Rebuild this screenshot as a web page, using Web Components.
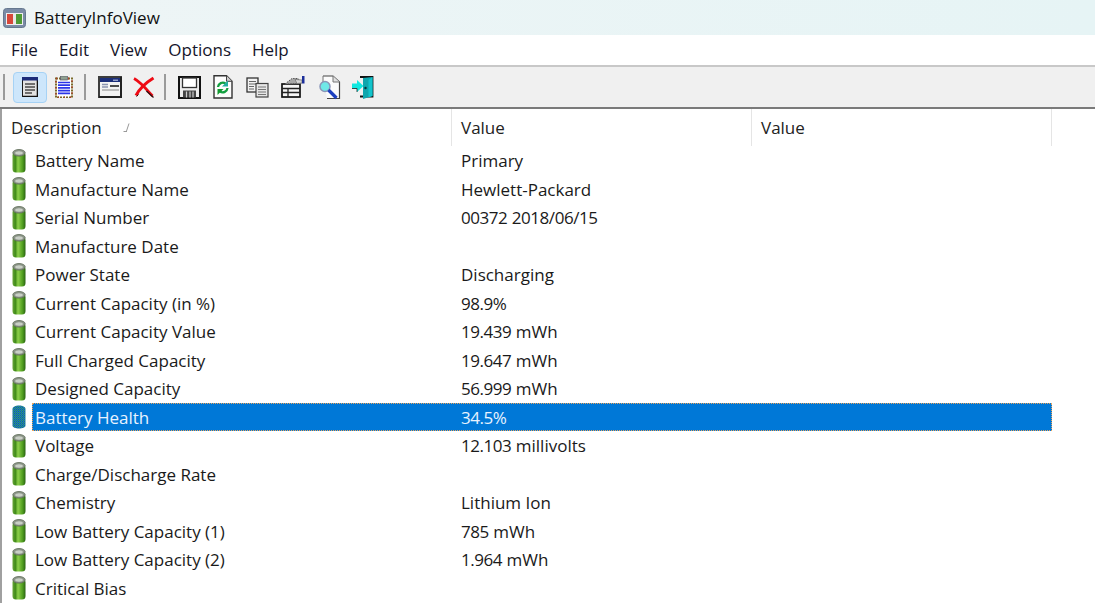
<!DOCTYPE html>
<html><head><meta charset="utf-8">
<style>
html,body{margin:0;padding:0;background:#fff;width:1095px;height:603px;overflow:hidden;font-family:"Open Sans","Noto Sans",sans-serif;color:#1a1a1a}
</style></head><body>
<app-window></app-window>
<script>
const ICONS={
doc:`<svg width="16" height="20" viewBox="0 0 16 20"><rect x=".5" y=".5" width="15" height="19" fill="#e2e2e2" stroke="#1a1a1a"/><path d="M15.500 1v18.500H1" fill="none" stroke="#111" stroke-width="1.600"/><rect x="0" y="0" width="16" height="3.500" fill="#1b2a78"/><path d="M3 7h10M3 10h10M3 13h10M3 16h7" stroke="#4a4a4a" stroke-width="1.300"/></svg>`,
clip:`<svg width="18" height="22" viewBox="0 0 18 22"><rect x="1" y="2.500" width="16" height="19" fill="#fff" stroke="#7a6a2a" stroke-width="2" stroke-dasharray="2 1"/><rect x="1" y="2.500" width="16" height="19" fill="none" stroke="#b03a2a" stroke-width="2" stroke-dasharray="1 5"/><rect x="5.500" y="0" width="7" height="4" fill="#8fa090" stroke="#556"  stroke-width=".7"/><path d="M3 6.500h12M3 9.200h12M3 11.900h12M3 14.600h12M3 17.300h12" stroke="#2b35e8" stroke-width="1.700"/></svg>`,
win:`<svg width="24" height="22" viewBox="0 0 24 22"><rect x="1" y="1" width="22" height="20" fill="#f3f3f3" stroke="#3c3c3c" stroke-width="2"/><path d="M23 1v20H1" fill="none" stroke="#222" stroke-width="2"/><rect x="2" y="2" width="20" height="4" fill="#1c2f7a"/><path d="M4 8.500h6M4 11h6" stroke="#8a94b0" stroke-width="1.500"/><path d="M15 4.200h5" stroke="#cdd6ee"/><path d="M12 10h9" stroke="#222" stroke-width="1.600"/><path d="M4 14h17" stroke="#888"/></svg>`,
del:`<svg width="22" height="22" viewBox="0 0 22 22"><path d="M1 2.500C7 5.500 12 11.500 19.500 20" stroke="#ee0a14" stroke-width="2.800" fill="none"/><path d="M20.500 2C14 6 6.500 12.500 3 19.500" stroke="#ee0a14" stroke-width="3" fill="none"/><path d="M13.500 15l7 6.500" stroke="#2a1010" stroke-width="1.300"/><path d="M3.500 20.500l2-2" stroke="#2a1010" stroke-width="1"/></svg>`,
save:`<svg width="23" height="23" viewBox="0 0 23 23"><path d="M1 1h21v21H1z" fill="#ececec" stroke="#111" stroke-width="2"/><rect x="4.500" y="2" width="14" height="9.500" fill="#fff" stroke="#333" stroke-width="1.300"/><rect x="5" y="14.500" width="13" height="7" fill="#444"/><path d="M8.500 15.500v6M12 15.500v6M15 15.500v6" stroke="#ccc" stroke-width="1.200"/></svg>`,
refresh:`<svg width="20" height="24" viewBox="0 0 20 24"><path d="M1 .8h12.500l5.500 5.500V23H1z" fill="#fdfdfd" stroke="#333" stroke-width="1.400"/><path d="M13.500.8v5.500H19" fill="#ccc" stroke="#444"/><path d="M5 12a4.800 4.800 0 0 1 7.500-3.500" stroke="#12a040" stroke-width="2.300" fill="none"/><path d="M15 5.500v6h-6z" fill="#22b0a0"/><path d="M14.500 13a4.800 4.800 0 0 1-7.500 3.500" stroke="#12a040" stroke-width="2.300" fill="none"/><path d="M4.500 20v-6h6z" fill="#129a30"/></svg>`,
copy:`<svg width="23" height="21" viewBox="0 0 23 21"><rect x="1" y="1" width="11" height="14" fill="#f2f2f2" stroke="#333" stroke-width="1.300"/><path d="M3 4.500h7M3 7h7M3 9.500h5M3 12h5" stroke="#666"/><rect x="10" y="6.500" width="12" height="13.500" fill="#e6e6e6" stroke="#444" stroke-width="1.200"/><path d="M12 10h8M12 12.500h8M12 15h8M12 17.500h8" stroke="#777"/></svg>`,
props:`<svg width="24" height="22" viewBox="0 0 24 22"><rect x="1" y="8" width="18" height="13" fill="#f6f6f6" stroke="#111" stroke-width="1.700"/><path d="M1 12.500h18M1 16.500h18M7 12.500v8.500" stroke="#222" stroke-width="1.300"/><path d="M4 8l7-5.500 6 0 3 5z" fill="#a8a8a8" stroke="#555" stroke-dasharray="1.500 1"/><path d="M14 3.500l7 .5 0 3-5 .5z" fill="#d8d8d8" stroke="#777" stroke-width=".8"/><rect x="21" y="0" width="2.500" height="7.500" fill="#1c2f9a"/></svg>`,
find:`<svg width="22" height="25" viewBox="0 0 22 25"><path d="M4 1h10l6.500 6v16.500H8" fill="#fbfbfb" stroke="#444" stroke-width="1.200"/><path d="M4 1v6M14 1v6h6.500" fill="#e0e0e0" stroke="#777"/><circle cx="6" cy="11.500" r="5" fill="#6fe8e8" stroke="#8a96b8" stroke-width="1.500"/><path d="M9.500 15l8 8" stroke="#1c3fc0" stroke-width="3.200"/></svg>`,
exit:`<svg width="22" height="23" viewBox="0 0 22 23"><path d="M8 1h12.500v19.500H8" fill="none" stroke="#111" stroke-width="1.800"/><path d="M11 2l9.500-1v19l-9.500 3z" fill="#0fa6ad"/><path d="M20.500 1v19l-4 1.300V4z" fill="#12c4cc"/><circle cx="13.500" cy="12" r="1.200" fill="#04343a"/><path d="M0 7.500h5V4l6.500 6L5 16v-3.500H0z" fill="#10e8e0"/><path d="M5 16v-3.500H0" fill="none" stroke="#222" stroke-width=".8"/></svg>`
};
function battery(sel){
  if(sel) return `<svg width="16" height="26" viewBox="0 0 16 26"><defs><pattern id="p" width="2" height="2" patternUnits="userSpaceOnUse"><rect width="2" height="2" fill="#1478c4"/><rect width="1" height="1" fill="#2f8f5a"/><rect x="1" y="1" width="1" height="1" fill="#1f6f8a"/></pattern></defs><path d="M1.500 5c0-2 3-3.500 6.500-3.500s6.500 1.500 6.500 3.500v16.500c0 2-3 3-6.500 3s-6.500-1-6.500-3z" fill="url(#p)"/></svg>`;
  return `<svg width="16" height="26" viewBox="0 0 16 26"><defs><linearGradient id="g" x1="0" x2="1" y1="0" y2="0"><stop offset="0" stop-color="#6aa53a"/><stop offset=".22" stop-color="#3f8a18"/><stop offset=".42" stop-color="#8ed04a"/><stop offset=".78" stop-color="#4f9c1f"/><stop offset="1" stop-color="#2a6312"/></linearGradient></defs><rect x="1.500" y="4" width="13" height="20.500" rx="3.500" fill="url(#g)"/><ellipse cx="8" cy="4.800" rx="6.200" ry="3.300" fill="#8c9588" stroke="#5d6b55" stroke-width=".8"/><ellipse cx="8" cy="5" rx="3.800" ry="1.700" fill="#c9cfc6"/></svg>`;
}
class AppTitlebar extends HTMLElement{constructor(){super();this.attachShadow({mode:'open'}).innerHTML=`<style>:host{display:flex;align-items:center;height:35px;background:linear-gradient(90deg,#eef5f6,#e6f4f5);gap:8px;padding-left:3px;font-size:17px;color:#111}</style>
<svg width="23" height="20" viewBox="0 0 23 20"><rect x=".5" y=".5" width="22" height="19" rx="3" fill="#7a8ba6" stroke="#66788f"/><rect x="3" y="5" width="17" height="12" fill="#eee"/><rect x="4" y="6" width="6" height="10" fill="#d8473a"/><rect x="10" y="6" width="3" height="10" fill="#e8e8e8"/><rect x="13" y="6" width="6" height="10" fill="#4f9a35"/></svg><slot></slot>`}}
customElements.define('app-titlebar',AppTitlebar);
class AppMenubar extends HTMLElement{constructor(){super();this.attachShadow({mode:'open'}).innerHTML=`<style>:host{display:flex;align-items:center;height:30px;box-sizing:border-box;padding:0 0 2px 11px;background:#fff;gap:21px;font-size:17px;color:#15152a}</style>${['File','Edit','View','Options','Help'].map(t=>`<span>${t}</span>`).join('')}`}}
customElements.define('app-menubar',AppMenubar);
class AppToolbar extends HTMLElement{constructor(){super();const sep=m=>`<i class="s" style="margin:0 ${m[1]}px 0 ${m[0]}px"></i>`;const b=(k,c='',w=34)=>`<span class="b ${c}" style="width:${w}px">${ICONS[k]}</span>`;this.attachShadow({mode:'open'}).innerHTML=`<style>:host{display:flex;align-items:center;height:44px;box-sizing:border-box;background:#f0f0f0;border-top:2px solid #c8c8c8;border-bottom:2px solid #7a7a7a;padding-left:3px}
.s{display:block;flex:none;width:2px;height:26px;background:#9a9a9a}.b{display:flex;flex:none;align-items:center;justify-content:center;height:31px;box-sizing:border-box}.on{background:#cde6fb;border:1px solid #a6d2f5;border-radius:4px}</style>
${sep([0,8])}${b('doc','on')}${b('clip')}${sep([3,7])}${b('win')}${b('del')}${sep([3,6])}${b('save')}${b('refresh')}${b('copy')}${b('props',"",37)}${b('find',"",37)}${b('exit',"",30)}`}}
customElements.define('app-toolbar',AppToolbar);
class ListHeader extends HTMLElement{constructor(){super();this.attachShadow({mode:'open'}).innerHTML=`<style>:host{display:grid;grid-template-columns:450px 300px 300px;height:37.250px;font-size:17px;color:#222}
div{border-right:1px solid #e5e5e5;padding:0 0 0 9px;display:flex;align-items:center;box-sizing:border-box;height:37px;gap:20px}</style>
<div><span>Description</span><svg width="10" height="11" viewBox="0 0 10 11"><path d="M7 1.500L4.500 9M1.500 9.500h3.500" stroke="#999" fill="none"/></svg></div><div>Value</div><div>Value</div>`}}
customElements.define('list-header',ListHeader);
const fmt=v=>v.replace(/[\d.\/%]+/g,m=>`<span class="n">${m}</span>`);
class ListRow extends HTMLElement{constructor(){super();this.attachShadow({mode:'open'})}
connectedCallback(){const sel=this.hasAttribute('selected');this.shadowRoot.innerHTML=`<style>:host{display:flex;align-items:center;height:28.500px;font-size:17px;color:#1a1a1a}
.ic{width:30px;display:flex;padding-left:9px;box-sizing:border-box;flex:none}
.c{display:grid;grid-template-columns:423px 1fr;align-items:center;height:100%;width:1020px;box-sizing:border-box;padding-left:3px}
.sel{background:#0078d7;color:#e8f3ff;outline:1px dotted #e8a35c;outline-offset:-1px}.c>span+span{padding-left:3px}.n{letter-spacing:-.45px}
</style><span class="ic">${battery(sel)}</span><div class="c ${sel?'sel':''}"><span>${this.getAttribute('name')}</span><span>${fmt(this.getAttribute('value')||'')}</span></div>`}}
customElements.define('list-row',ListRow);
class ListView extends HTMLElement{constructor(){super();this.attachShadow({mode:'open'}).innerHTML=`<style>:host{display:block;border-left:2px solid #a0a0a0;height:494px;overflow:hidden;background:#fff}</style><list-header></list-header><slot></slot>`}}
customElements.define('list-view',ListView);
const ROWS=[['Battery Name','Primary'],['Manufacture Name','Hewlett-Packard'],['Serial Number','00372 2018/06/15'],['Manufacture Date',''],['Power State','Discharging'],['Current Capacity (in %)','98.9%'],['Current Capacity Value','19.439 mWh'],['Full Charged Capacity','19.647 mWh'],['Designed Capacity','56.999 mWh'],['Battery Health','34.5%',1],['Voltage','12.103 millivolts'],['Charge/Discharge Rate',''],['Chemistry','Lithium Ion'],['Low Battery Capacity (1)','785 mWh'],['Low Battery Capacity (2)','1.964 mWh'],['Critical Bias','']];
class AppWindow extends HTMLElement{constructor(){super();const s=this.attachShadow({mode:'open'});
s.innerHTML=`<style>:host{display:block;width:1095px;height:603px;overflow:hidden}</style><app-titlebar>BatteryInfoView</app-titlebar><app-menubar></app-menubar><app-toolbar></app-toolbar><list-view></list-view>`;
const lv=s.querySelector('list-view');
for(const [n,v,x] of ROWS){const r=document.createElement('list-row');r.setAttribute('name',n);r.setAttribute('value',v);if(x)r.setAttribute('selected','');lv.appendChild(r)}}}
customElements.define('app-window',AppWindow);
</script></body></html>
